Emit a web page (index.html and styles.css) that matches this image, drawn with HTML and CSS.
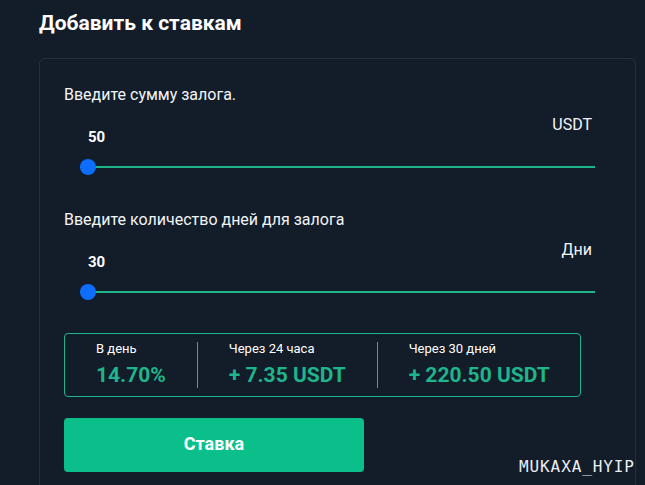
FILE: index.html
```html
<!DOCTYPE html>
<html lang="ru">
<head>
<meta charset="utf-8">
<title>Добавить к ставкам</title>
<link rel="stylesheet" href="styles.css">
</head>
<body>
<div class="page">
  <h1 class="title">Добавить к ставкам</h1>
  <div class="card">
    <div class="field">
      <div class="label">Введите сумму залога.</div>
      <div class="head">
        <span class="value">50</span>
        <span class="unit">USDT</span>
      </div>
      <input class="range" type="range" min="50" max="10000" value="50">
    </div>
    <div class="field">
      <div class="label">Введите количество дней для залога</div>
      <div class="head">
        <span class="value">30</span>
        <span class="unit">Дни</span>
      </div>
      <input class="range" type="range" min="30" max="365" value="30">
    </div>
    <div class="stats">
      <div class="stat">
        <div class="stat-label">В день</div>
        <div class="stat-value">14.70%</div>
      </div>
      <div class="stat">
        <div class="stat-label">Через 24 часа</div>
        <div class="stat-value">+ 7.35 USDT</div>
      </div>
      <div class="stat">
        <div class="stat-label">Через 30 дней</div>
        <div class="stat-value">+ 220.50 USDT</div>
      </div>
    </div>
    <button class="btn" type="button">Ставка</button>
  </div>
</div>
<div class="watermark">MUKAXA_HYIP</div>
</body>
</html>
```
FILE: styles.css
```css
* { box-sizing: border-box; }
html, body {
  margin: 0;
  height: 100%;
  overflow: hidden;
}
body {
  background: #131c29;
  color: #ffffff;
  font-family: Roboto, "Liberation Sans", Arial, sans-serif;
  position: relative;
}
.page {
  padding: 11px 0 0 39px;
}
.title {
  margin: 0;
  font-size: 21px;
  font-weight: 700;
  line-height: 24px;
  color: #ffffff;
}
.card {
  margin-top: 23px;
  width: 597px;
  height: 440px;
  border: 1px solid #262f3d;
  border-radius: 6px;
  padding: 26px 24px 0 24px;
}
.field {
  margin-bottom: 35px;
}
.field + .field {
  margin-bottom: 33px;
}
.label {
  font-size: 16px;
  line-height: 19px;
  color: #f2f5f7;
}
.head {
  display: flex;
  justify-content: space-between;
  align-items: flex-start;
  margin-top: 11px;
  height: 30px;
}
.value {
  padding: 13px 0 0 24px;
  font-size: 15px;
  line-height: 18px;
  font-weight: 700;
}
.unit {
  padding-right: 19px;
  font-size: 16px;
  line-height: 19px;
  color: #f2f5f7;
}
.range {
  display: block;
  -webkit-appearance: none;
  appearance: none;
  margin: 14px 0 0 16px;
  width: 515px;
  height: 16px;
  background: transparent;
  padding: 0;
}
.range:focus { outline: none; }
.range::-webkit-slider-runnable-track {
  height: 2px;
  background: #1eb58b;
  border: none;
}
.range::-webkit-slider-thumb {
  -webkit-appearance: none;
  appearance: none;
  width: 16px;
  height: 16px;
  margin-top: -7px;
  border-radius: 50%;
  background: #0d6efd;
  border: none;
}
.stats {
  display: flex;
  width: 517px;
  height: 64px;
  border: 1px solid #1eb58b;
  border-radius: 4px;
  padding: 8px 0;
}
.stat {
  padding: 0 31px;
}
.stat + .stat {
  border-left: 1px solid #1eb58b;
}
.stat-label {
  font-size: 13px;
  line-height: 14px;
  color: #ffffff;
}
.stat-value {
  margin-top: 6px;
  font-size: 21px;
  line-height: 26px;
  font-weight: 700;
  color: #1eb58b;
  white-space: nowrap;
}
.btn {
  display: block;
  margin-top: 21px;
  width: 300px;
  height: 54px;
  border: none;
  border-radius: 4px;
  padding: 0 0 3px;
  background: #0bbf8b;
  color: #ffffff;
  font-family: Roboto, "Liberation Sans", Arial, sans-serif;
  font-size: 18px;
  font-weight: 700;
}
.watermark {
  position: absolute;
  left: 519px;
  top: 458px;
  font-family: "DejaVu Sans Mono", monospace;
  font-size: 16px;
  letter-spacing: 0.9px;
  line-height: 18px;
  color: #e9eef2;
}
```
